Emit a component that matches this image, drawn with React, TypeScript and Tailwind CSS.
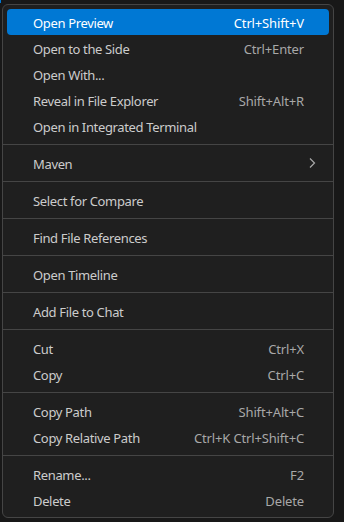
import React from "react";

type Item = { label: string; shortcut?: string; submenu?: boolean; active?: boolean };
const groups: Item[][] = [
  [
    { label: "Open Preview", shortcut: "Ctrl+Shift+V", active: true },
    { label: "Open to the Side", shortcut: "Ctrl+Enter" },
    { label: "Open With..." },
    { label: "Reveal in File Explorer", shortcut: "Shift+Alt+R" },
    { label: "Open in Integrated Terminal" },
  ],
  [{ label: "Maven", submenu: true }],
  [{ label: "Select for Compare" }],
  [{ label: "Find File References" }],
  [{ label: "Open Timeline" }],
  [{ label: "Add File to Chat" }],
  [
    { label: "Cut", shortcut: "Ctrl+X" },
    { label: "Copy", shortcut: "Ctrl+C" },
  ],
  [
    { label: "Copy Path", shortcut: "Shift+Alt+C" },
    { label: "Copy Relative Path", shortcut: "Ctrl+K Ctrl+Shift+C" },
  ],
  [
    { label: "Rename...", shortcut: "F2" },
    { label: "Delete", shortcut: "Delete" },
  ],
];

function Row({ item }: { item: Item }) {
  return (
    <div
      className={
        item.active
          ? "flex h-[26px] items-center rounded-[4px] bg-[#0078d4] pl-[26px] pr-[25px] pt-[2px] text-white"
          : "flex h-[26px] items-center rounded-[4px] pl-[26px] pr-[25px] pt-[2px] text-[#cccccc]"
      }
    >
      <span className="flex-1 whitespace-nowrap">{item.label}</span>
      {item.shortcut && (
        <span
          className={
            item.active
              ? "whitespace-nowrap tracking-[-0.15px] text-white"
              : "whitespace-nowrap tracking-[-0.15px] text-[#a8a8a8]"
          }
        >
          {item.shortcut}
        </span>
      )}
      {item.submenu && (
        <svg width="8" height="12" viewBox="0 0 8 12" className="mr-[-12px] mt-[-2px]">
          <path d="M2 1.5 L6.5 6 L2 10.5" fill="none" stroke="#a8a8a8" strokeWidth="1.2" />
        </svg>
      )}
    </div>
  );
}

export default function App() {
  return (
    <div
      className="relative h-[522px] w-[344px] overflow-hidden bg-[#181818] pt-[4px] pl-[2px] text-[13px] leading-[20px] tracking-[-0.35px]"
      style={{ fontFamily: '"Noto Sans", "Open Sans", sans-serif' }}
    >
      <div className="absolute left-0 top-0 h-[3px] w-[1px] bg-[#0078d4]" />
      <div className="w-[332px] rounded-[6px] border border-[#454545] bg-[#1f1f1f] p-[4px]">
        {groups.map((g, gi) => (
          <div key={gi}>
            {gi > 0 && <div className="mx-[-4px] my-[5px] h-px bg-[#454545]" />}
            {g.map((it) => (
              <Row key={it.label} item={it} />
            ))}
          </div>
        ))}
      </div>
    </div>
  );
}
